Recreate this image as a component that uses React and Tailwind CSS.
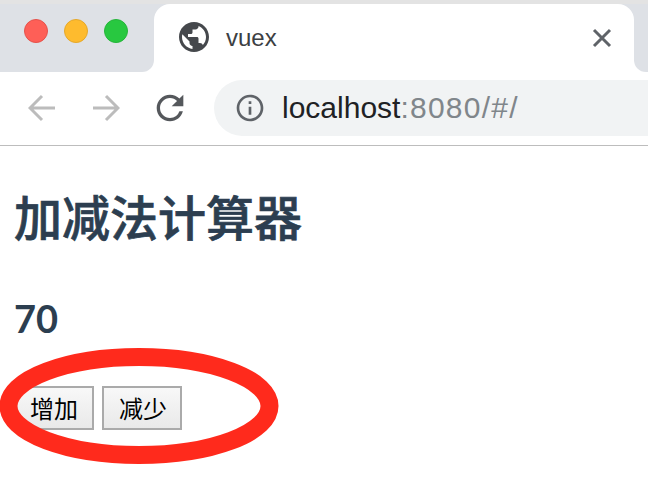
import { MdPublic, MdInfoOutline, MdRefresh } from 'react-icons/md';

const LIGHTS = [
  'bg-[#fe5f57] border-[#e5524b]',
  'bg-[#febb2e] border-[#e5a82a]',
  'bg-[#28c840] border-[#25b53a]',
];

function TabBar() {
  return (
    <div className="bg-white">
      <div className="h-1 bg-[#e3e3e3]" />
      <div className="flex h-[68px]">
        <div className="w-[154px] shrink-0 bg-[#dee1e6] rounded-br-xl flex gap-4 pl-6 pt-[15px]">
          {LIGHTS.map((c) => (
            <span key={c} className={`w-6 h-6 rounded-full border ${c}`} />
          ))}
        </div>
        <div className="w-[480px] shrink-0 bg-[#dee1e6]">
          <div className="h-full bg-white rounded-t-2xl flex items-center pl-[22px] pr-[22px] pb-[1px] text-[#3c4043]">
            <MdPublic size={36} className="-mt-[1px] text-[#45484c]" />
            <span className="ml-[14px] text-[24px] leading-none flex-1 font-['Liberation_Sans',sans-serif]">vuex</span>
            <svg width="20" height="20" viewBox="0 0 20 20" className="text-[#5f6368]">
              <path d="M2 2 L18 18 M18 2 L2 18" stroke="currentColor" strokeWidth="3" fill="none" />
            </svg>
          </div>
        </div>
        <div className="flex-1 bg-[#dee1e6] rounded-bl-xl" />
      </div>
    </div>
  );
}

function Toolbar() {
  return (
    <div className="h-[74px] border-b border-[#bdbdbd] flex items-center pb-[2px] bg-white">
      <svg width="28" height="28" viewBox="0 0 28 28" className="ml-[28px] text-[#bcbcbc]">
        <path d="M27 14 H3 M14 2 L2 14 L14 26" stroke="currentColor" strokeWidth="3" fill="none" />
      </svg>
      <svg width="28" height="28" viewBox="0 0 28 28" className="ml-[36px] text-[#bcbcbc]">
        <path d="M1 14 H25 M14 2 L26 14 L14 26" stroke="currentColor" strokeWidth="3" fill="none" />
      </svg>
      <MdRefresh size={40} className="ml-[30px] text-[#55585c]" />
      <div className="ml-[24px] h-14 flex-1 bg-[#f1f3f4] rounded-l-[28px] flex items-center pl-[20px]">
        <MdInfoOutline size={32} className="text-[#5f6368]" />
        <span className="ml-[16px] text-[30px] leading-none text-[#202124] font-['Liberation_Sans',sans-serif]">
          localhost<span className="text-[#80868b] tracking-[1.25px]">:8080/#/</span>
        </span>
      </div>
    </div>
  );
}

const BTN = 'w-20 h-11 border-2 border-[#aaaaaa] bg-gradient-to-b from-[#f8f8f8] to-[#e9e9e9] text-black text-[24px] leading-none flex items-center justify-center';

export default function App() {
  return (
    <div className="relative w-[648px] h-[484px] overflow-hidden bg-white font-['Noto_Sans_CJK_SC',sans-serif]">
      <TabBar />
      <Toolbar />
      <main className="pl-[14px] text-[#2c3e50]">
        <h1 className="mt-[39px] text-[48px] leading-[60px] font-medium [-webkit-text-stroke:0.7px_#2c3e50]">加减法计算器</h1>
        <h2 className="mt-[49px] text-[38px] leading-[48px] font-bold font-['Lato','Noto_Sans',sans-serif]">70</h2>
        <div className="mt-[44px] flex gap-2">
          <button className={BTN}>增加</button>
          <button className={`${BTN} pl-[2px]`}>减少</button>
        </div>
      </main>
      {/* annotation drawn over the page */}
      <svg width="290" height="130" viewBox="0 0 290 130" className="absolute left-0 top-[340px]">
        <ellipse cx="139" cy="66" rx="130.5" ry="49" fill="none" stroke="#ff2a1c" strokeWidth="18" />
      </svg>
    </div>
  );
}
